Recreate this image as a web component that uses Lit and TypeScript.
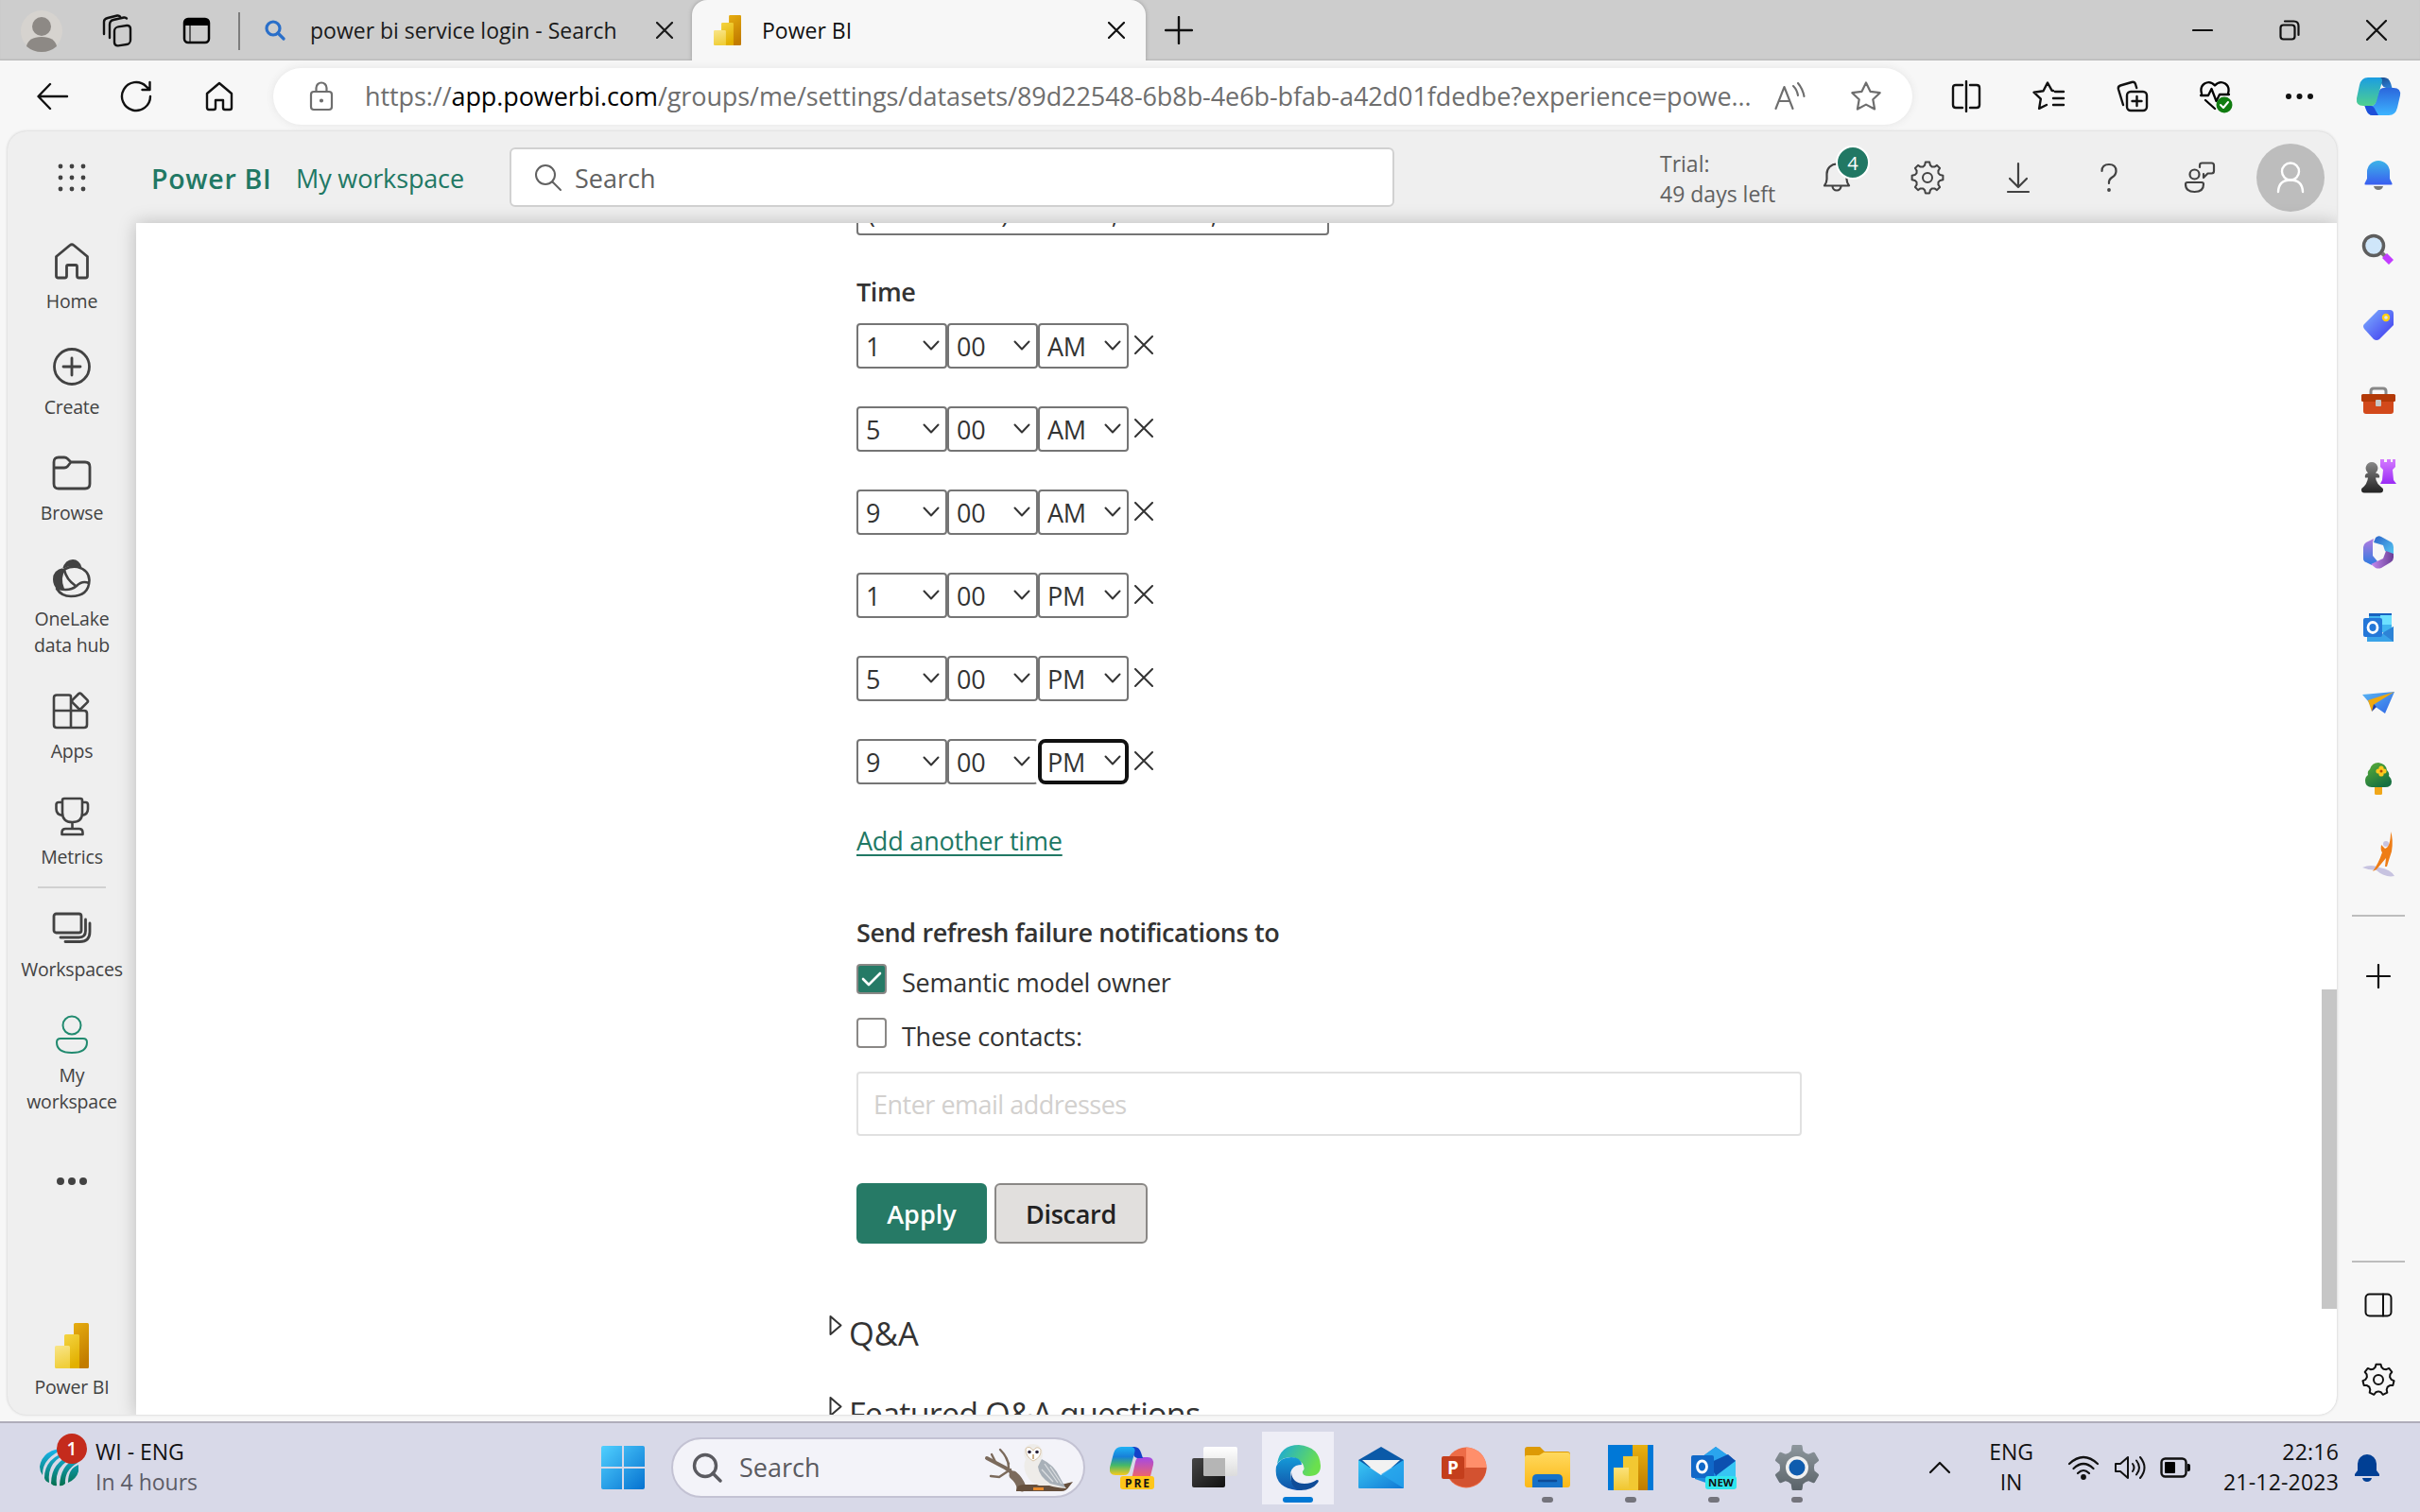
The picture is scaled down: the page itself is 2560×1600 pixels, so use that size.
import { LitElement, html, css, svg, TemplateResult, SVGTemplateResult } from "lit";
import { customElement, property, state } from "lit/decorators.js";
import { classMap } from "lit/directives/class-map.js";

/* Stroke icon drawn on a w x h pixel canvas. */
const line = (w: number, h: number, body: SVGTemplateResult, sw = 2): TemplateResult => html`<svg
  width=${w} height=${h} viewBox="0 0 ${w} ${h}" fill="none" stroke="currentColor"
  stroke-width=${sw} stroke-linecap="round" stroke-linejoin="round">${body}</svg>`;

/* Filled, multi-colour picture. */
const art = (w: number, h: number, body: SVGTemplateResult): TemplateResult => html`<svg
  width=${w} height=${h} viewBox="0 0 ${w} ${h}">${body}</svg>`;

const grad = (id: string, a: string, b: string, x2 = 0, y2 = 1) => svg`<linearGradient id=${id} x1="0" y1="0" x2=${x2} y2=${y2}>
  <stop offset="0" stop-color=${a}/><stop offset="1" stop-color=${b}/></linearGradient>`;

/* Gear outline with n teeth, centred on c. */
function gearPath(c: number, rOut: number, rIn: number, n: number): string {
  const pts: string[] = [];
  const step = (Math.PI * 2) / n;
  for (let i = 0; i < n; i++) {
    const a = i * step - Math.PI / 2;
    const add = (ang: number, r: number) => pts.push(`${(c + Math.cos(ang) * r).toFixed(1)} ${(c + Math.sin(ang) * r).toFixed(1)}`);
    add(a - step * 0.17, rOut);
    add(a + step * 0.17, rOut);
    add(a + step * 0.27, rIn + 0.6);
    add(a + step * 0.5, rIn - 0.6);
    add(a + step * 0.73, rIn + 0.6);
  }
  return "M" + pts.join("L") + "Z";
}

const gear = (size: number, n: number, hole: number) => line(size, size, svg`
  <path d=${gearPath(size / 2, size / 2 - 1.5, size / 2 - 5, n)}/>
  <circle cx=${size / 2} cy=${size / 2} r=${hole}/>`);

const cross = (s: number, sw = 2) => line(s, s, svg`<path d="M1 1L${s - 1} ${s - 1}M${s - 1} 1L1 ${s - 1}"/>`, sw);
const plus = (s: number, sw = 2) => line(s, s, svg`<path d="M${s / 2} 1V${s - 1}M1 ${s / 2}H${s - 1}"/>`, sw);
const dots = (r: number, gap: number) => art(gap * 2 + r * 2, r * 2, svg`${[0, 1, 2].map(i => svg`<circle cx=${r + gap * i} cy=${r} r=${r} fill="currentColor"/>`)}`);

const powerBi = (w: number, h: number) => html`<svg width=${w} height=${h} viewBox="0 0 36 48" preserveAspectRatio="none">
  <defs>${grad("p1", "#e6ad10", "#c27c00", 0.3)}${grad("p2", "#f4d442", "#e2b000", 0.3)}${grad("p3", "#f9e589", "#f0cf3c", 0.2)}</defs>
  <rect x="20" width="16" height="48" rx="1.5" fill="url(#p1)"/>
  <path d="M10 13.500a1.500 1.500 0 0 1 1.500-1.500h13a1.500 1.500 0 0 1 1.500 1.500V48H10Z" fill="url(#p2)"/>
  <path d="M0 25.500a1.500 1.500 0 0 1 1.500-1.500h13a1.500 1.500 0 0 1 1.500 1.500V48H1.500a1.500 1.500 0 0 1-1.500-1.500Z" fill="url(#p3)"/>
</svg>`;

const icon = {
  workspaces: () => line(36, 36, svg`<rect x="15" y="12" width="17" height="20" rx="4" transform="skewY(-8) translate(0 4)"/>
    <path d="M10 25V11q0-4 4-5L25 3.500q2-.3 3 1"/><path d="M4 21V8q0-3 4-4L18 1.500q2-.3 3 1"/>`, 2.4),
  tabActions: () => art(30, 30, svg`<rect x="2" y="2" width="26" height="25" rx="4" fill="none" stroke="#000" stroke-width="2.500"/>
    <path d="M2 9V6a4 4 0 0 1 4-4h18a4 4 0 0 1 4 4v3Z"/><path d="M8 9v17" stroke="#333" stroke-width="1.500"/>`),
  profile: () => art(44, 44, svg`<circle cx="22" cy="22" r="22" fill="#d6d3cf"/><circle cx="22" cy="17" r="10" fill="#8d8985"/>
    <path d="M6 38q2-10 16-10t16 10q-7 6-16 6T6 38Z" fill="#8d8985"/>`),
  blueSearch: () => line(22, 22, svg`<circle cx="9" cy="9" r="7"/><path d="M14 14l6 6"/>`, 3.2),
  back: () => line(34, 30, svg`<path d="M32 15H2M14 2L1.500 15L14 28"/>`, 2.4),
  refresh: () => line(34, 34, svg`<path d="M32 17A15 15 0 1 1 27.500 6.300L31 9.500M31.500 2v8H23.500"/>`, 2.4),
  homeBar: () => line(30, 32, svg`<path d="M2 13L15 2l13 11v15q0 2-2 2h-5q-2 0-2-2v-8h-8v8q0 2-2 2H4q-2 0-2-2Z"/>`, 2.4),
  lock: () => line(26, 32, svg`<rect x="2" y="11" width="22" height="19" rx="3"/><path d="M7.500 11V7a5.500 5.500 0 0 1 11 0v4"/><circle cx="13" cy="20.500" r="1" fill="currentColor"/>`, 2.2),
  readAloud: () => line(34, 30, svg`<path d="M1.500 28L10.500 5l9 23M5 20h11M20 4q4 4 5 10M25 1q5 6 6.500 14"/>`, 2.1),
  star: () => line(34, 34, svg`<path d="M17 2.500l4.500 9.300 10.200 1.400-7.400 7.100 1.800 10.200L17 25.600l-9.100 4.900 1.800-10.200-7.400-7.100 10.200-1.400Z"/>`, 2.2),
  split: () => line(32, 34, svg`<path d="M12 5H5Q2 5 2 8v18q0 3 3 3h7M20 5h7q3 0 3 3v18q0 3-3 3h-7M16 1v32"/>`, 2.4),
  favorites: () => line(36, 34, svg`<path d="M22 11l-1.500-.3L16 2.500l-4.500 8.800-10 1.400 7.300 7-1.700 10.200L15 26M24 12h9M22 19h11M22 26h11"/>`, 2.4),
  collections: () => line(36, 34, svg`<rect x="12" y="12" width="21" height="20" rx="4"/><path d="M22.500 17v10M17.500 22h10M8 26L3 9.500q-.8-3 2-4L17 2q3-.8 4 2l1.200 4"/>`, 2.4),
  heart: () => html`<svg width="36" height="36" viewBox="0 0 36 36" fill="none" stroke="#000" stroke-width="2.300" stroke-linecap="round" stroke-linejoin="round">
    <path d="M3 15Q1 8 6 4.500q6-3.500 11 2 5-5.500 11-2 5 3.500 3 10.500M2 17h8l3.500-7 5 13 3.500-7h10M7 22l10 9"/>
    <circle cx="27" cy="27" r="8.500" fill="#107c10" stroke="none"/><path d="M23 27l3 3 5-6" stroke="#fff" stroke-width="2"/></svg>`,
  copilot: () => art(48, 44, svg`<defs>${grad("c1", "#1b9de2", "#4fd08f", 0, 1)}${grad("c2", "#1b4a8a", "#2a7bd0", 0.5)}${grad("c3", "#2b66dc", "#3db4ff", 0)}</defs>
    <path d="M35 42H18q-5 0-7-6l-1.500-4H16q4 0 5-4l3-10q1.500-5 6-5h10q8 0 7 8l-3 13q-2 8-9 8Z" fill="url(#c3)"/>
    <path d="M24 42h-6q-5 0-7-6l-1.500-4H16q3 0 5 5Z" fill="#1f4fd8"/>
    <path d="M24 2h6q5 0 7 6l1.500 5H32q-2.500 0-4-3Z" fill="url(#c2)"/>
    <path d="M13 2h13q3 1 1.500 6L22 27q-1.500 5-6 5H8q-8 0-7-8l3-14Q6 2 13 2Z" fill="url(#c1)"/>`),
  waffle: () => art(30, 32, svg`${[0, 1, 2].map(r => [0, 1, 2].map(c => svg`<circle cx=${3 + c * 12} cy=${4 + r * 12} r="2.400" fill="currentColor"/>`))}`),
  search: () => line(30, 30, svg`<circle cx="12" cy="12" r="10"/><path d="M19.500 19.500L28 28"/>`),
  bell: () => line(32, 34, svg`<path d="M3 25.500h26q-2.500-3.500-2.500-7V13a10.500 10.500 0 0 0-21 0v5.500q0 3.500-2.500 7ZM11.500 26a4.500 4.500 0 0 0 9 0"/>`, 2.2),
  download: () => line(28, 34, svg`<path d="M14 2v24M5 18l9 9 9-9M3 32h22"/>`, 2.2),
  help: () => line(20, 32, svg`<path d="M2.500 9q0-7 7.500-7t7.500 7q0 4-4 6.500T10 22"/><circle cx="10" cy="29" r=".8" fill="currentColor"/>`, 2.2),
  feedback: () => line(34, 34, svg`<circle cx="11.500" cy="13.500" r="5"/><path d="M2 24q0-2 2-2h15q2 0 2 2 0 8-9.500 8T2 24ZM17 6V4q0-2.500 2.500-2.500h10Q32 1.500 32 4v6q0 2.500-2.500 2.500h-4L21 17v-4"/>`, 2.2),
  person: () => line(30, 34, svg`<circle cx="15" cy="10.500" r="9"/><path d="M2 32q.5-12.500 13-12.500T28 32"/>`, 2.4),
  navHome: () => line(38, 40, svg`<path d="M2.500 15.500L17 3.500q2-1.500 4 0l14.500 12V36q0 2-2 2h-7q-2 0-2-2V26q0-1.500-1.500-1.500h-8q-1.500 0-1.500 1.500v10q0 2-2 2h-7q-2 0-2-2Z"/>`, 2.8),
  navCreate: () => line(40, 42, svg`<circle cx="20" cy="21" r="18.500"/><path d="M20 12v18M11 21h18"/>`, 2.8),
  navBrowse: () => line(42, 38, svg`<path d="M2 8q0-5 5-5h6q2 0 3.500 1.500L20 8h15q5 0 5 5v18q0 5-5 5H7q-5 0-5-5ZM2 14h11q2 0 3.500-1.500L20 8"/>`, 2.8),
  navLake: () => html`<svg width="42" height="42" viewBox="0 0 42 42" fill="none" stroke="currentColor" stroke-width="2.600" stroke-linecap="round">
    <path d="M14 11Q20 8 27 9Q39 12 39.500 23Q39 40 20 40Q10 40 5 32M13 12Q15 22 25 29M7 32Q19 35 26 29Q32 23 39 26"/>
    <path d="M11 11Q14 1 22 1Q29 1 31.500 9.500Q20 6 11 11ZM12 10Q1 12 1 22Q1 29 6 33L13 32Q8 20 15 11Z" fill="currentColor" stroke="none"/></svg>`,
  navApps: () => line(42, 42, svg`<path d="M20 21V6.500q0-2-2-2H5q-3 0-3 3V36q0 3 3 3h29q3 0 3-3V24q0-3-3-3H2M20 21v18"/><rect x="23" y="4.500" width="13" height="13" rx="2" transform="rotate(45 29.500 11)"/>`, 2.6),
  navMetrics: () => line(40, 42, svg`<path d="M10 4q0-2 2-2h17q2 0 2 2v13q0 10-10.500 10T10 17ZM10 6H6Q3.500 6 3.500 8.500V13q0 6 6.500 7M31 6h3.500Q37 6 37 8.500V13q0 6-6.500 7M20.500 27v7M9.500 40v-2q0-4 4-4h14q4 0 4 4v2Z"/>`, 2.6),
  navSpaces: () => line(42, 36, svg`<rect x="2" y="2" width="29" height="20" rx="2.500"/><path d="M35.500 8v12q0 7-7 7H9M40 12v9q0 10.500-10.500 10.500H14" />`, 2.8),
  navMine: () => line(36, 42, svg`<circle cx="18" cy="11" r="9.500"/><path d="M2 29q0-4 4-4h24q4 0 4 4 0 11-16 11T2 29Z"/>`),
  panel: () => line(30, 26, svg`<rect x="1.500" y="1.500" width="27" height="23" rx="4"/><path d="M20 1.500v23"/>`),
};

const side = {
  bell: () => art(34, 36, svg`<defs>${grad("s1", "#3cb4e8", "#3a5df0")}</defs><path d="M5 16a12 12 0 0 1 24 0v7l2.500 5q.5 1.500-1 1.500h-27q-1.500 0-1-1.500L5 23Z" fill="url(#s1)"/><path d="M12 31h10q-1 4-5 4t-5-4Z" fill="#777"/>`),
  search: () => art(36, 36, svg`<path d="M22 22l4 4" stroke="#777" stroke-width="4"/><path d="M24.500 24.500l7 7" stroke="#c23cff" stroke-width="7"/><circle cx="13" cy="14" r="10.500" fill="#cfe6fa" stroke="#5e5e5e" stroke-width="3.500"/>`),
  tag: () => art(34, 34, svg`<defs>${grad("s2", "#7fb4ff", "#3d34ee", 1)}</defs><path d="M17 1h12q4 0 4 4v12L18 32q-3 2-6 0L2 21q-2-3 0-5Z" fill="url(#s2)"/><circle cx="25" cy="9" r="3" fill="#d9e4ff" stroke="#ffcf13" stroke-width="2.400"/>`),
  tools: () => art(38, 30, svg`<path d="M11 9V5q0-3 3-3h10q3 0 3 3v4" fill="none" stroke="#888" stroke-width="3"/><rect x="3" y="12" width="32" height="17" rx="3" fill="#d2491b"/><rect x="1" y="8" width="36" height="8" rx="1.500" fill="#b33907"/><rect x="16" y="14" width="6" height="7" rx="1" fill="#c7c7c7"/>`),
  games: () => art(38, 38, svg`<defs>${grad("s3", "#d47bff", "#9a2bf5")}${grad("s4", "#888", "#222")}</defs><path d="M21 1h4v3h3V1h4v3h2V1h3v8l-3 3 1 11 3 4H21l2-4 1-11-3-3Z" fill="url(#s3)"/><path d="M12 4a6.500 6.500 0 0 1 4 11.500q5 1 4 5h-4q1 6 5 9 3 2 3 4 0 3-3 3H4q-3 0-3-3 0-2 3-4 3-3 4-9H5q-1-4 3-5A6.500 6.500 0 0 1 12 4Z" fill="url(#s4)"/>`),
  m365: () => art(34, 36, svg`<defs>${grad("s5", "#b37be0", "#2c7be0")}${grad("s6", "#2a62c8", "#58cdf5", 1)}${grad("s7", "#c58bf0", "#6a3d96", 1, 0)}</defs>
    <path d="M14 3Q17 0 20 2l11 6q2 2 2 5v9l-9-5-2-6-10-3Z" fill="url(#s6)"/><path d="M12 4L4 8q-3 2-3 5v12q0 3 3 4l6 3 6-4-5-6V8Z" fill="url(#s5)"/><path d="M33 20v4q0 3-3 5l-10 6q-3 1-6 0l-5-4 13-6 3-8Z" fill="url(#s7)"/><circle cx="17" cy="18" r="6" fill="#f7f7f7"/>`),
  outlook: () => art(34, 32, svg`<rect x="7" y="1" width="24" height="20" fill="#41b5ef"/><rect x="7" y="1" width="24" height="3" fill="#1862c0"/><rect x="19" y="3" width="12" height="10" fill="#6de0ff"/><path d="M33 15v16H5V20l16 3Z" fill="#3aa3e8"/><path d="M33 15L21 22l12 9Z" fill="#2d83d6"/><rect x="1" y="6" width="20" height="20" rx="2" fill="#2477d8"/><ellipse cx="11" cy="16" rx="5" ry="5.500" fill="none" stroke="#fff" stroke-width="2.800"/>`),
  drop: () => art(36, 26, svg`<defs>${grad("s8", "#5bb6f3", "#2f66e6", 1)}</defs><path d="M1 4L35 1 25 24l-10-7-3 3-5-9Z" fill="url(#s8)"/><path d="M35 1L7 10l4 12 3-8Z" fill="#efa90f"/><path d="M11 22l2-8 3 3Z" fill="#1e3fa8"/>`),
  tree: () => art(30, 36, svg`<defs>${grad("s9", "#5cb038", "#177040", 0.6)}</defs><rect x="11" y="24" width="8" height="11" rx="1.500" fill="#f0a71a"/><path d="M15 1q8 1 9 8 3 3 2 6 3 3 3 6 0 6-7 6H8q-7 0-7-7 0-4 3-6Q3 10 6 8 8 1 15 1Z" fill="url(#s9)"/><g fill="#ffc91e"><circle cx="18" cy="7" r="2.600"/><circle cx="18" cy="13" r="2.600"/><circle cx="15" cy="10" r="2.600"/><circle cx="21" cy="10" r="2.600"/></g><circle cx="18" cy="10" r="1.500" fill="#b0500a"/>`),
  surf: () => art(36, 52, svg`<path d="M1 40q9-4 18 0 12 2 16 9-10 2-19-6-8 0-15-3Z" fill="#c7c3e0"/><circle cx="26" cy="15" r="3" fill="#c7c3e0"/><path d="M31 2q3 8 1 21-3 9-5 16h-2l1-9-10 12-4 2q6-8 10-20-2-2-1-8l4 4q6-2 6-18Z" fill="#ee7d16"/>`),
};

const task = {
  start: () => art(46, 46, svg`<defs>${grad("w1", "#50d0ff", "#0672d0", 1)}</defs><path d="M0 2q0-2 2-2h20v22H0ZM24 0h20q2 0 2 2v20H24ZM0 24h22v22H2q-2 0-2-2ZM24 24h22v20q0 2-2 2H24Z" fill="url(#w1)"/>`),
  owl: () => art(94, 52, svg`<g stroke="#7b6a5c" fill="none" stroke-linecap="round"><path d="M37 49Q34 32 22 26L3 16" stroke-width="4"/><path d="M28 28l-12 8-9-1M26 26Q26 16 17 7M12 20L8 12M26 22l-3-7" stroke-width="2.400"/><path d="M31 34q6 5 9 13" stroke-width="9"/></g>
    <path d="M34 50q0-6 8-6h40l12-3-4 5q-3 5-8 5H34Z" fill="#66503e"/>
    <path d="M42 10Q43 1 52 1t10 10q0 4-2 7 12 7 19 18 4 8 8 12-12-1-18-3H58q-9-2-14-13-3-8 0-15-2-3-2-7Z" fill="#eeece9"/>
    <path d="M61 17q13 6 19 19l6 11-16-4q-12-8-13-18Z" fill="#a8b0b8"/><path d="M64 22l14 20M61 28l12 13M70 25l12 18" stroke="#d9dcdf" stroke-width="1.300"/>
    <path d="M44 6q4-4 8 2 4-6 8-1 1 8-8 12-8-4-8-13Z" fill="#fff" stroke="#d8c4a8"/><circle cx="48" cy="9.500" r="1.800" fill="#2a2238"/><circle cx="56" cy="9.500" r="1.800" fill="#2a2238"/><path d="M52 12v5" stroke="#c9a97e" stroke-width="1.800"/>
    <path d="M52 47h11v3H52Z" fill="#e98b2c"/>`),
  copilot: () => html`<svg width="48" height="48" viewBox="0 0 48 48"><defs>${svg`<linearGradient id="t1" x1="0" y1="0" x2="0" y2="1"><stop offset="0" stop-color="#1fb2f5"/><stop offset=".35" stop-color="#1780d8"/><stop offset=".65" stop-color="#45b868"/><stop offset="1" stop-color="#f8cb1c"/></linearGradient>${grad("t2", "#a348e8", "#ff6b4f", 0)}`}</defs>
    <path d="M33 13h8q7 0 6 8l-3 12q-2 5-8 5H20q4-2 5-6l3-14q1-5 5-5Z" fill="url(#t2)"/>
    <path d="M22 2h5q5 0 7 6l2 6h-6q-4-1-4-5Z" fill="#1440c8"/><path d="M13 2h11q5 1 3 7l-5 18q-1 5-6 5H7q-7 0-6-8L5 9q2-7 8-7Z" fill="url(#t1)"/>
    <rect x="12" y="33" width="36" height="14" rx="3" fill="#ffc61a"/><text x="30" y="44.500" font-size="12" font-weight="700" text-anchor="middle" fill="#111" font-family="Open Sans, sans-serif" textLength="26">PRE</text></svg>`,
  view: () => art(50, 46, svg`<defs>${grad("t3", "#fff", "#dcdcdc")}${grad("t4", "#454545", "#111", 1)}</defs><rect x="1" y="13" width="35" height="31" rx="2" fill="url(#t4)"/><rect x="13" y="1" width="36" height="31" rx="2" fill="url(#t3)"/><path d="M13 13h23v19H15q-2 0-2-2Z" fill="#b5b5b5"/>`),
  edge: () => art(50, 50, svg`<defs>${grad("e1", "#17a6e0", "#6be04d", 1, 0.4)}${grad("e2", "#159ad8", "#1152a8")}</defs>
    <path d="M3 21Q6 1 26 1q22 2 23 22 0 11-12 11-8 0-7-5 3-3 0-8-4-6-12-7Q8 14 3 21Z" fill="url(#e1)"/>
    <path d="M18 14Q6 14 2 24q-3 22 22 25h6Q17 45 17 33q0-7 6-10 3-1 6-1-1-8-11-8Z" fill="url(#e2)"/>
    <path d="M18 30q1 12 14 12 7 0 13-4 3 0 1 3-6 8-18 8Q15 46 18 30Z" fill="#0f4c98"/>`),
  mail: () => art(50, 46, svg`<defs>${grad("m1", "#3cc8f5", "#1078d4", 1)}</defs><path d="M1 15L25 1l24 14v8H1Z" fill="#0b5aa8"/><path d="M5 15h40L25 33Z" fill="#f2f2f2"/><path d="M1 15l24 16 24-16v29q0 1-1 1H2q-1 0-1-1Z" fill="url(#m1)"/><path d="M25 30L49 45V15Z" fill="#29aaf0" opacity=".7"/>`),
  ppt: () => art(50, 44, svg`<circle cx="27" cy="22" r="21.500" fill="#ed6c47"/><path d="M27 .5A21.500 21.500 0 0 1 48.500 22H27Z" fill="#ff8f6b"/><path d="M27 22h21.500A21.500 21.500 0 0 1 8 31Z" fill="#d35230"/><rect x="1" y="10" width="24" height="24" rx="2" fill="#c43e1c"/><text x="13" y="29" font-size="19" font-weight="700" fill="#fff" text-anchor="middle" font-family="Open Sans, sans-serif">P</text>`),
  explorer: () => art(50, 44, svg`<defs>${grad("x1", "#ffd95e", "#fcb816")}</defs><path d="M1 3q0-3 3-3h13l5 5h24q3 0 3 3v20H1Z" fill="#dd9a05"/><path d="M1 11q0-2 2-2h13l5-3h25q3 0 3 3v31q0 3-3 3H4q-3 0-3-3Z" fill="url(#x1)"/><path d="M9 43V34q0-5 5-5h22q5 0 5 5v9Z" fill="#1672c8"/><path d="M16 36h18" stroke="#0c4c98" stroke-width="2.500" stroke-linecap="round"/>`),
  powerbi: () => art(48, 48, svg`<defs>${grad("b1", "#e8b010", "#c07c00")}${grad("b3", "#fbe27a", "#f0c62e")}</defs><rect width="48" height="48" fill="#0078d7"/><rect x="26" width="16" height="48" fill="url(#b1)"/><rect x="16" y="12" width="16" height="36" fill="#f2c832"/><rect x="6" y="24" width="16" height="24" fill="url(#b3)"/>`),
  outlook: () => html`<svg width="50" height="48" viewBox="0 0 50 48"><path d="M5 18L27 2l21 15v18L28 44 5 36Z" fill="#1b8be0"/><path d="M27 2l21 15-20 14L12 13Z" fill="#2aa5ee"/><path d="M18 20L40 10l8 7-20 16Z" fill="#0c50b0"/><path d="M48 17v18L28 44V32Z" fill="#37c6f4"/><rect x="1" y="11" width="24" height="24" rx="2" fill="#1068c8"/><ellipse cx="12.500" cy="23" rx="5" ry="6" fill="none" stroke="#fff" stroke-width="2.800"/>
    <rect x="16" y="33" width="33" height="14" rx="3" fill="#2fe6ee"/><text x="32.500" y="44" font-size="11" font-weight="700" text-anchor="middle" fill="#111" font-family="Open Sans, sans-serif" textLength="27" lengthAdjust="spacingAndGlyphs">NEW</text></svg>`,
  settings: () => art(50, 50, svg`<defs>${grad("g1", "#8d969c", "#5b646a")}</defs><path d=${gearPath(25, 23, 17, 6)} fill="url(#g1)" stroke="url(#g1)" stroke-width="3" stroke-linejoin="round"/><circle cx="25" cy="25" r="12" fill="#f0f0f0"/><circle cx="25" cy="25" r="8.500" fill="#0f5cae"/>`),
  cricket: () => art(44, 44, svg`<defs>${grad("k1", "#19b8f4", "#04704e")}</defs>
    <path d="M30 2Q4 3 1 22q0 5 3 9Q3 12 30 2ZM33 5Q6 12 6 34q1 4 5 5Q8 14 35 7ZM36 9Q13 17 13 40q3 3 6 2Q16 20 39 12ZM39 14Q23 20 22 42q3 1 6-2Q27 26 41 18ZM42 20Q31 24 31 39q9-4 11-12Z" fill="url(#k1)"/>`),
};

@customElement("time-row")
class TimeRow extends LitElement {
  @property() hour = "";
  @property() half = "";
  @property({ type: Boolean }) focusedHalf = false;
  static styles = css`
    :host { display: flex; align-items: center; height: 48px; color: #333; font-size: 27px; }
    .pick { box-sizing: border-box; width: 96px; height: 48px; border: 2px solid #757575; border-radius: 4px; display: flex; align-items: center; justify-content: space-between; padding: 1px 6px 0 8px; background: #fff; letter-spacing: -0.2px; }
    .pick svg { margin-top: -2px; }
    .focus { border: 4px solid #111; border-radius: 8px; padding: 0 4px 0 6px; }
    .flush { border-right-color: #fff; }
    .remove { display: flex; margin: -3px 0 0 6px; }
  `;
  private pick(text: string, cls: Record<string, boolean> = {}) {
    return html`<div class=${classMap({ pick: true, ...cls })}><span>${text}</span>${line(18, 12, svg`<path d="M1.500 1.500L9 9.500l7.500-8"/>`)}</div>`;
  }
  render() {
    return html`${this.pick(this.hour)}${this.pick("00", { flush: this.focusedHalf })}${this.pick(this.half, { focus: this.focusedHalf })}
      <span class="remove">${cross(20, 2)}</span>`;
  }
}

@customElement("app-root")
class AppRoot extends LitElement {
  @state() private times = [["1", "AM"], ["5", "AM"], ["9", "AM"], ["1", "PM"], ["5", "PM"], ["9", "PM"]];

  static styles = css`
    :host { display: flex; flex-direction: column; width: 2560px; height: 1600px; overflow: hidden; background: #f7f7f7; font-family: "Open Sans", "Noto Sans", sans-serif; color: #111; }
    svg { display: block; flex: none; }
    span { white-space: nowrap; }
    .mid { display: grid; place-items: center; }

    .tabs { display: flex; height: 64px; background: #cdcdcd; flex: none; font-size: 23px; align-items: stretch; box-shadow: inset 0 -2px 2px -1px #b4b4b4; }
    .tools { display: flex; align-items: center; width: 254px; padding-left: 22px; box-sizing: border-box; border-right: 2px solid #7d7d7d; height: 40px; margin: 13px 0 0; }
    .tools .t1 { margin-left: 40px; }
    .tools .t2 { margin-left: 51px; }
    .tab { display: flex; align-items: center; box-sizing: border-box; }
    .tab1 { width: 478px; padding: 0 20px 0 26px; color: #1a1a1a; }
    .tab1 .blue { color: #2a6fc9; margin-right: 26px; }
    .tab2 { width: 480px; padding: 0 22px 0 23px; background: #f7f7f7; border-radius: 16px 16px 0 0; box-shadow: 0 0 4px #999; clip-path: inset(0 -6px 0 -6px); }
    .tab2 .t { margin-left: 22px; }
    .push { margin-left: auto; }
    .tabplus { margin-left: 20px; align-self: center; margin-top: -1px; }
    .win { display: grid; grid-template-columns: repeat(3, 92px); margin-left: auto; place-items: center; }

    .bar { display: flex; height: 75px; align-items: center; flex: none; }
    .omni { display: flex; align-items: center; box-sizing: border-box; width: 1734px; height: 60px; border-radius: 30px; background: #fff; margin: 1px 0 0 42px; padding: 0 32px 0 38px; color: #6e6e6e; font-size: 27px; box-shadow: 0 0 8px #e4e4e4; }
    .omni b { color: #000; font-weight: 400; }
    .url { margin: -2px 0 0 33px; letter-spacing: -0.08px; }
    .omni .aloud { margin-left: auto; margin-right: 46px; }
    .acts { display: grid; grid-template-columns: repeat(5, 88px) 80px; place-items: center; margin: 0 0 0 13px; }

    .body { display: flex; height: 1365px; flex: none; }
    .page { width: 2464px; height: 1358px; margin-left: 8px; box-sizing: border-box; background: #efefef; border-radius: 20px; overflow: hidden; box-shadow: 0 0 3px #c4c4c4; display: flex; flex-direction: column; }
    .head { display: flex; align-items: center; height: 97px; flex: none; color: #424242; padding-left: 53px; }
    .brand { margin: 2px 0 0 69px; font-weight: 600; font-size: 28.500px; width: 127px; letter-spacing: 0.7px; color: #217864; }
    .crumb { margin: 2px 0 0 26px; font-size: 27px; color: #217864; width: 178px; letter-spacing: -0.15px; }
    .find { margin-left: 48px; box-sizing: border-box; width: 936px; height: 63px; border: 2px solid #d1d1d1; border-radius: 6px; background: #fff; display: flex; align-items: center; padding-left: 24px; gap: 13px; font-size: 27px; color: #616161; }
    .find span { margin-top: 2px; }
    .trial { margin: 2px 0 0 281px; font-size: 23px; line-height: 32px; width: 134px; color: #616161; }
    .hicons { display: grid; grid-template-columns: repeat(6, 96px); place-items: center; margin: 1px 0 0 5px; }
    .note { position: relative; }
    .badge { position: absolute; left: 15px; top: -17px; width: 32px; height: 32px; border: 2px solid #fff; border-radius: 50%; background: #217864; color: #fff; font-size: 20px; }
    .ava { width: 72px; height: 72px; border-radius: 50%; background: #bdbdbd; color: #fff; }

    .split { display: flex; flex: 1; min-height: 0; }
    .nav { width: 136px; flex: none; display: flex; flex-direction: column; align-items: center; color: #424242; font-size: 19.500px; line-height: 28px; text-align: center; letter-spacing: -0.2px; }
    .item { height: 112px; box-sizing: border-box; padding-top: 18px; display: flex; flex-direction: column; align-items: center; }
    .item .pic { height: 43px; margin-bottom: 8px; }
    .tall { height: 140px; }
    .rule { width: 72px; height: 2px; background: #d1d1d1; margin: 2px 0 3px; }
    .mine { color: #218a6f; }
    .more { height: 120px; padding-top: 51px; box-sizing: border-box; }
    .home { margin-top: auto; padding-bottom: 15px; display: flex; flex-direction: column; align-items: center; gap: 6px; }

    .main { flex: 1; background: #fff; box-shadow: 0 0 18px rgba(0,0,0,.22); display: flex; overflow: hidden; color: #333; font-size: 27px; }
    .form { flex: 1; padding-left: 762px; display: flex; flex-direction: column; align-items: flex-start; }
    .zone { box-sizing: border-box; flex: none; width: 500px; height: 48px; margin-top: -35px; border: 2px solid #757575; border-radius: 4px; padding: 0 50px 0 10px; line-height: 45px; white-space: nowrap; letter-spacing: -0.25px; }
    .label { font-weight: 600; height: 41px; line-height: 41px; flex: none; letter-spacing: -0.4px; }
    .time { margin-top: 39px; }
    .rows { display: flex; flex-direction: column; gap: 40px; margin-top: 13px; }
    .add { color: #217864; text-decoration: underline; text-decoration-thickness: 2px; text-underline-offset: 4px; margin-top: 39px; height: 41px; line-height: 41px; letter-spacing: -0.2px; }
    .send { margin-top: 55px; line-height: 43px; }
    .check { display: flex; gap: 16px; height: 32px; margin-top: 14px; line-height: 40px; letter-spacing: -0.25px; }
    .check2 { margin-top: 25px; }
    .box { width: 32px; height: 32px; box-sizing: border-box; border: 2px solid #8a8886; border-radius: 4px; }
    .on { background: #267a66; color: #fff; }
    .mail { box-sizing: border-box; width: 1000px; height: 68px; border: 2px solid #e1e1e1; border-radius: 4px; margin-top: 25px; line-height: 66px; padding-left: 16px; color: #d2d0ce; letter-spacing: -0.5px; }
    .btns { display: flex; gap: 8px; margin-top: 50px; font-weight: 600; }
    .btn { box-sizing: border-box; height: 64px; border-radius: 6px; line-height: 65px; text-align: center; }
    .apply { width: 138px; background: #267a66; color: #fff; }
    .discard { width: 162px; background: #e1dfdd; border: 2px solid #8a8886; line-height: 61px; color: #222; letter-spacing: -0.3px; }
    .sect { display: flex; gap: 7px; height: 51px; line-height: 53px; font-size: 34.500px; margin: 68px 0 0 -29px; }
    .sect svg { margin-top: 7px; }
    .sect2 { margin-top: 35px; font-size: 34px; letter-spacing: -0.75px; }
    .track { width: 16px; padding-top: 811px; }
    .thumb { height: 338px; background: #c6c6c6; }

    .side { width: 88px; display: flex; flex-direction: column; align-items: center; }
    .cell { height: 80px; }
    .first { padding-top: 5px; }
    .bar2 { width: 56px; height: 2px; background: #bdbdbd; margin-top: 24px; }
    .plus { margin-top: 50px; }
    .low { margin-top: 288px; }
    .pan { margin-top: 32px; }
    .set { margin-top: 48px; }

    .taskbar { display: flex; flex: 1; border-top: 2px solid #afadba; background: #d8d9e8; align-items: center; font-size: 23px; line-height: 32px; }
    .score { display: flex; align-items: center; width: 615px; padding-left: 41px; box-sizing: border-box; }
    .score .ico { position: relative; margin: -3px 16px 0 0; }
    .red { position: absolute; left: 19px; top: -13px; width: 32px; height: 32px; border-radius: 50%; background: #c42b1c; color: #fff; font-size: 19px; font-weight: 600; }
    .grey { color: #5c5c66; }
    .two { display: flex; flex-direction: column; margin-top: -3px; }
    .slot { width: 88px; }
    .tsearch { box-sizing: border-box; width: 438px; height: 64px; margin-left: 7px; border-radius: 32px; border: 2px solid #c3c2d3; background: #f3f3f9; display: flex; align-items: center; padding: 0 11px 0 20px; font-size: 27px; color: #5a5a60; }
    .tsearch .st { margin-left: 18px; }
    .apps { display: flex; margin-left: 5px; }
    .app { position: relative; width: 88px; height: 94px; }
    .app.live { background: linear-gradient(#eeeef6, #eeeef6) center 9px / 76px 77px no-repeat; }
    .dot { position: absolute; left: 38px; bottom: 10px; width: 12px; height: 6px; border-radius: 3px; background: #74747c; }
    .live .dot { left: 28px; width: 32px; background: #0078d4; }
    .tray { display: flex; align-items: center; margin-left: auto; padding-right: 42px; }
    .tray .lang { text-align: center; margin: -3px 36px 0 40px; }
    .tray .clock { text-align: right; margin: -3px 16px 0 33px; letter-spacing: 0.2px; }
    .stat { display: flex; gap: 15px; align-items: center; }
  `;

  private nav(label: TemplateResult | string, pic: TemplateResult, tall = false, mine = false) {
    return html`<div class=${classMap({ item: true, tall })}><div class=${classMap({ pic: true, mid: true, mine })}>${pic}</div><span>${label}</span></div>`;
  }

  private triangle() {
    return line(14, 24, svg`<path d="M1.500 2v19L12.500 11.500Z"/>`, 2);
  }

  private app(pic: TemplateResult, running = false, live = false) {
    return html`<div class=${classMap({ app: true, mid: true, live })}>${pic}${running ? html`<i class="dot"></i>` : ""}</div>`;
  }

  render() {
    return html`
      <div class="tabs">
        <div class="tools">${icon.profile()}<span class="t1">${icon.workspaces()}</span><span class="t2">${icon.tabActions()}</span></div>
        <div class="tab tab1"><span class="blue">${icon.blueSearch()}</span><span>power bi service login - Search</span><span class="push">${cross(18, 2.2)}</span></div>
        <div class="tab tab2">${powerBi(29, 32)}<span class="t">Power BI</span><span class="push">${cross(18, 2.2)}</span></div>
        <span class="tabplus">${plus(30, 2.4)}</span>
        <div class="win">
          ${line(22, 4, svg`<path d="M1 2h20"/>`, 2.2)}
          ${line(22, 22, svg`<rect x="1.500" y="5.500" width="15" height="15" rx="3"/><path d="M6 1.500h9.500q5 0 5 5V16"/>`, 2.2)}
          ${cross(22, 2.2)}
        </div>
      </div>

      <div class="bar">
        <span style="width:39px"></span>${icon.back()}<span style="width:54px"></span>${icon.refresh()}<span style="width:56px"></span>${icon.homeBar()}
        <div class="omni">${icon.lock()}<span class="url">https://<b>app.powerbi.com</b>/groups/me/settings/datasets/89d22548-6b8b-4e6b-bfab-a42d01fdedbe?experience=powe...</span>
          <span class="aloud">${icon.readAloud()}</span>${icon.star()}</div>
        <div class="acts">${icon.split()}${icon.favorites()}${icon.collections()}${icon.heart()}${dots(3, 11.500)}${icon.copilot()}</div>
      </div>

      <div class="body">
        <div class="page">
          <div class="head">
            ${icon.waffle()}<span class="brand">Power BI</span><span class="crumb">My workspace</span>
            <div class="find">${icon.search()}<span>Search</span></div>
            <div class="trial">Trial:<br><span>49 days left</span></div>
            <div class="hicons">
              <div class="note">${icon.bell()}<div class="badge mid">4</div></div>
              ${gear(36, 8, 5)}${icon.download()}${icon.help()}${icon.feedback()}
              <div class="ava mid">${icon.person()}</div>
            </div>
          </div>
          <div class="split">
            <div class="nav">
              ${this.nav("Home", icon.navHome())}
              ${this.nav("Create", icon.navCreate())}
              ${this.nav("Browse", icon.navBrowse())}
              ${this.nav(html`OneLake<br>data hub`, icon.navLake(), true)}
              ${this.nav("Apps", icon.navApps())}
              ${this.nav("Metrics", icon.navMetrics())}
              <div class="rule"></div>
              ${this.nav("Workspaces", icon.navSpaces())}
              ${this.nav(html`My<br>workspace`, icon.navMine(), true, true)}
              <div class="more">${dots(4, 12)}</div>
              <div class="home">${powerBi(36, 48)}<span>Power BI</span></div>
            </div>
            <div class="main">
              <div class="form">
                <div class="zone">(UTC+05:30) Chennai, Kolkata, Mumbai</div>
                <div class="label time">Time</div>
                <div class="rows">
                  ${this.times.map(([h, half], i) => html`<time-row .hour=${h} .half=${half} .focusedHalf=${i === this.times.length - 1}></time-row>`)}
                </div>
                <span class="add">Add another time</span>
                <div class="label send">Send refresh failure notifications to</div>
                <div class="check"><div class="box on mid">${line(24, 20, svg`<path d="M3 10l6 6L21 4"/>`, 2.6)}</div><span>Semantic model owner</span></div>
                <div class="check check2"><div class="box"></div><span>These contacts:</span></div>
                <div class="mail">Enter email addresses</div>
                <div class="btns"><div class="btn apply">Apply</div><div class="btn discard">Discard</div></div>
                <div class="sect">${this.triangle()}<span>Q&amp;A</span></div>
                <div class="sect sect2">${this.triangle()}<span>Featured Q&amp;A questions</span></div>
              </div>
              <div class="track"><div class="thumb"></div></div>
            </div>
          </div>
        </div>
        <div class="side">
          <div class="first"></div>
          ${Object.values(side).map(pic => html`<div class="cell mid">${pic()}</div>`)}
          <div class="bar2"></div>
          <div class="plus">${plus(26, 2.2)}</div>
          <div class="bar2 low"></div>
          <div class="pan">${icon.panel()}</div>
          <div class="set">${gear(36, 7, 5)}</div>
        </div>
      </div>

      <div class="taskbar">
        <div class="score"><div class="ico">${task.cricket()}<div class="red mid">1</div></div>
          <div class="two"><span>WI - ENG</span><span class="grey">In 4 hours</span></div></div>
        <div class="slot mid">${task.start()}</div>
        <div class="tsearch">${line(32, 32, svg`<circle cx="14" cy="14" r="11.500"/><path d="M22 22l8 8"/>`, 3.4)}<span class="st">Search</span><span class="push">${task.owl()}</span></div>
        <div class="apps">
          ${this.app(task.copilot())}${this.app(task.view())}${this.app(task.edge(), true, true)}${this.app(task.mail())}${this.app(task.ppt())}
          ${this.app(task.explorer(), true)}${this.app(task.powerbi(), true)}${this.app(task.outlook(), true)}${this.app(task.settings(), true)}
        </div>
        <div class="tray">
          ${line(24, 14, svg`<path d="M2 12L12 2l10 10"/>`, 2.2)}
          <div class="two lang"><span>ENG</span><span>IN</span></div>
          <div class="stat">
            ${line(34, 26, svg`<path d="M2 9q15-14 30 0M6.500 14q10.500-10 21 0M11 19q6-6 12 0"/><circle cx="17" cy="23" r="1.800" fill="currentColor"/>`, 2.2)}
            ${line(34, 26, svg`<path d="M2 9h5l8-7v22l-8-7H2ZM20 9q3 4 0 8M24 5.500q6 7.500 0 15M28 2q9 11 0 22"/>`, 2)}
            ${art(34, 22, svg`<rect x="1.500" y="1.500" width="26" height="19" rx="4" fill="none" stroke="#111" stroke-width="2.400"/><rect x="5" y="5" width="11" height="12" rx="1"/><path d="M29 7h1q2 0 2 2v4q0 2-2 2h-1Z"/>`)}
          </div>
          <div class="two clock"><span>22:16</span><span>21-12-2023</span></div>
          ${art(28, 32, svg`<path d="M4 12a10 10 0 0 1 20 0v7l3 4v2H1v-2l3-4ZM9 27h10q-1 4-5 4t-5-4Z" fill="#003f94"/>`)}
        </div>
      </div>`;
  }
}
